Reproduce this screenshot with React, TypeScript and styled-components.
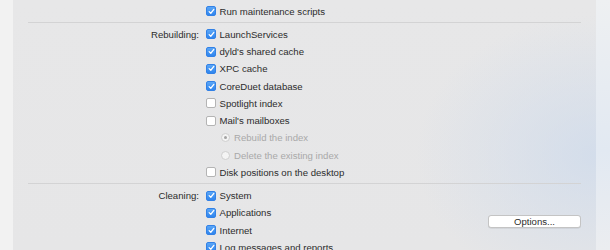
import React from 'react'
import styled, { createGlobalStyle } from 'styled-components'

const GlobalStyle = createGlobalStyle`
  html, body {
    margin: 0;
    padding: 0;
    background: #f1f1f1;
    overflow: hidden;
  }
  body {
    font-family: 'Liberation Sans', Arial, sans-serif;
    -webkit-font-smoothing: antialiased;
  }
`

const Window = styled.div`
  display: flex;
  width: 610px;
  height: 250px;
  overflow: hidden;
  background: #f1f1f1;
`
const LeftGutter = styled.div`
  width: 13px;
  flex-shrink: 0;
  background: #f2f2f2;
`
const Panel = styled.div`
  width: 583px;
  flex-shrink: 0;
  padding: 2.4px 15px 0 15px;
  box-sizing: border-box;
  background:
    radial-gradient(ellipse 180px 140px at 100% 62%, rgba(205, 218, 236, 0.75), rgba(205, 218, 236, 0) 100%),
    linear-gradient(180deg, #e7e7e8 0%, #e6e6e7 100%);
`
const RightGutter = styled.div`
  flex-grow: 1;
  background: linear-gradient(180deg, #eef0f2 0%, #e2e9f2 60%, #ebedf0 100%);
`
const Section = styled.div`
  display: grid;
  grid-template-columns: 171px 1fr auto;
  column-gap: 7px;
  grid-auto-rows: 17.25px;
`
const Divider = styled.div`
  height: 1px;
  margin: 2px 0 3px;
  background: #d3d3d4;
`
const GroupLabel = styled.div`
  grid-column: 1;
  text-align: right;
  font-size: 9.6px;
  line-height: 17.25px;
  color: #2c2c2c;
`
const Row = styled.label<{ $indent?: number }>`
  grid-column: 2;
  display: flex;
  align-items: center;
  gap: 3.5px;
  padding-left: ${(p) => p.$indent || 0}px;
  font-size: 9.6px;
  color: #2c2c2c;
  white-space: nowrap;
`
const RadioRow = styled(Row)`
  gap: 4px;
  color: #a9a9a9;
`
const Box = styled.span<{ $checked: boolean }>`
  width: 10px;
  height: 10px;
  flex-shrink: 0;
  box-sizing: border-box;
  border-radius: 2px;
  display: flex;
  align-items: center;
  justify-content: center;
  background: ${(p) => (p.$checked ? 'linear-gradient(180deg, #5aa6f7 0%, #2f85ee 100%)' : '#ffffff')};
  border: 1px solid ${(p) => (p.$checked ? '#3281e6' : '#b4b4b4')};
`
const Radio = styled.span<{ $on: boolean }>`
  width: 9px;
  height: 9px;
  flex-shrink: 0;
  box-sizing: border-box;
  border-radius: 50%;
  border: 1px solid #cfcfcf;
  background: #f4f4f4;
  display: flex;
  align-items: center;
  justify-content: center;
  &::after {
    content: '';
    width: 3px;
    height: 3px;
    border-radius: 50%;
    background: ${(p) => (p.$on ? '#a3a3a3' : 'transparent')};
  }
`
const OptionsButton = styled.button`
  grid-column: 3;
  grid-row: 2 / span 2;
  align-self: center;
  justify-self: end;
  width: 93px;
  height: 13px;
  padding: 0;
  box-sizing: border-box;
  border: 1px solid #c4c4c4;
  border-radius: 3px;
  background: #ffffff;
  font-family: inherit;
  font-size: 9.6px;
  line-height: 11px;
  color: #2c2c2c;
  box-shadow: 0 0.5px 0.5px rgba(0, 0, 0, 0.12);
`

const Check = () => (
  <svg width="7" height="7" viewBox="0 0 8 8">
    <path d="M1.3 4.2 L3.2 6 L6.7 1.6" fill="none" stroke="#fff" strokeWidth="1.4" strokeLinecap="round" strokeLinejoin="round" />
  </svg>
)

const CheckRow = ({ label, checked }: { label: string; checked: boolean }) => (
  <Row>
    <Box $checked={checked}>{checked && <Check />}</Box>
    {label}
  </Row>
)

const rebuilding = [
  { label: 'LaunchServices', checked: true },
  { label: "dyld's shared cache", checked: true },
  { label: 'XPC cache', checked: true },
  { label: 'CoreDuet database', checked: true },
  { label: 'Spotlight index', checked: false },
  { label: "Mail's mailboxes", checked: false }
]

const cleaning = [
  { label: 'System', checked: true },
  { label: 'Applications', checked: true },
  { label: 'Internet', checked: true },
  { label: 'Log messages and reports', checked: true }
]

const App = () => {
  return (
    <Window>
      <GlobalStyle />
      <LeftGutter />
      <Panel>
        <Section>
          <CheckRow label="Run maintenance scripts" checked={true} />
        </Section>
        <Divider />
        <Section>
          <GroupLabel>Rebuilding:</GroupLabel>
          {rebuilding.map((item) => (
            <CheckRow key={item.label} label={item.label} checked={item.checked} />
          ))}
          <RadioRow $indent={15}>
            <Radio $on={true} />
            Rebuild the index
          </RadioRow>
          <RadioRow $indent={15}>
            <Radio $on={false} />
            Delete the existing index
          </RadioRow>
          <CheckRow label="Disk positions on the desktop" checked={false} />
        </Section>
        <Divider />
        <Section>
          <GroupLabel>Cleaning:</GroupLabel>
          {cleaning.map((item) => (
            <CheckRow key={item.label} label={item.label} checked={item.checked} />
          ))}
          <OptionsButton>Options...</OptionsButton>
        </Section>
      </Panel>
      <RightGutter />
    </Window>
  )
}

export default App
